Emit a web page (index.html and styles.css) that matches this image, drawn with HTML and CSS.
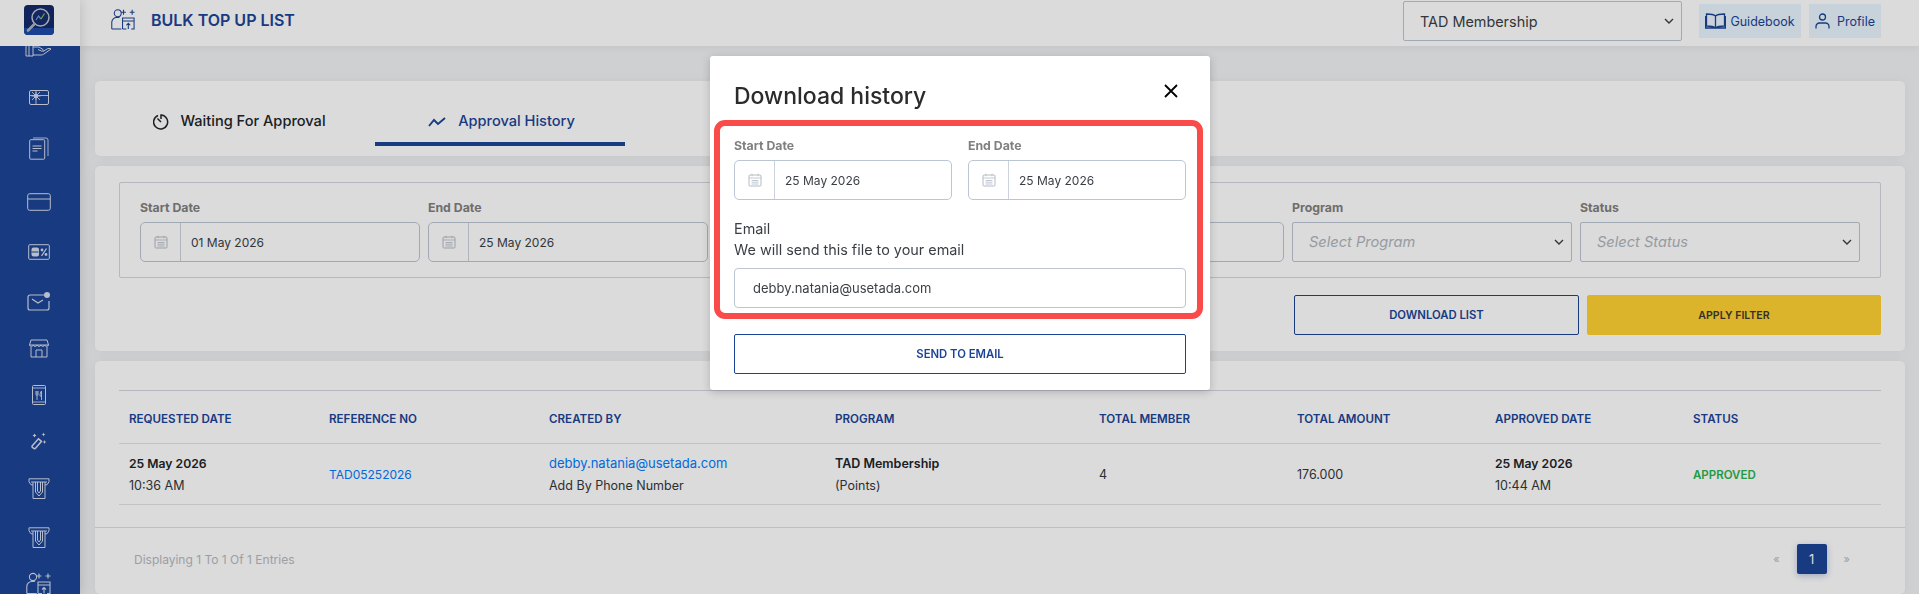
FILE: index.html
```html
<!DOCTYPE html>
<html lang="en">
<head>
<meta charset="UTF-8">
<title>Bulk Top Up List</title>
<link rel="stylesheet" href="styles.css">
</head>
<body>
    <svg class="sprites" width="0" height="0">
        <symbol id="i-calendar" viewBox="0 0 14 14" fill="none" stroke="currentColor">
            <rect x="1" y="2" width="12" height="11" rx="1"/>
            <path d="M1 5h12M4 .8v2.400M10 .8v2.400M3.500 7.500h7M3.500 9.200h7M3.500 11h7" stroke-width=".8"/>
        </symbol>
        <symbol id="i-chevron" viewBox="0 0 10 6" fill="none" stroke="currentColor" stroke-width="1.400">
            <path d="M1 1l4 4 4-4"/>
        </symbol>
        <symbol id="i-atm" viewBox="0 0 22 21" fill="none" stroke="currentColor">
            <path d="M1 .8h20v3l-2 3h-2M1 .8v3l2 3h2M3 4h16"/>
            <path d="M5 4v16.500h12V4"/>
            <path d="M7.500 4v10l3.500 4 3.500-4V4M9.500 4v9l1.500 2 1.500-2V4"/>
        </symbol>
        <symbol id="i-topup" viewBox="0 0 26 22" fill="none" stroke="currentColor" stroke-width="1.100">
            <circle cx="7" cy="5" r="3.600"/>
            <path d="M.8 21.500v-7c0-3 2.500-5 5-5h3M.8 21.500h10"/>
            <path d="M13 1.500v5M10.500 4h5M22 1.500v5M19.500 4h5"/>
            <path d="M12 21.500V10h12v11.500h-3M12 13h12M12 21.500h4M18 21.500v-6M16 17.500l2-2 2 2"/>
        </symbol>
    </svg>

    <div class="app">
        <aside class="sidebar">
            <div class="logo-box">
                <svg class="logo" viewBox="0 0 30 30">
                    <rect width="30" height="30" rx="4" fill="#14296b"/>
                    <path d="M0 23h30v3a4 4 0 0 1-4 4H4a4 4 0 0 1-4-4z" fill="#1d4aa8"/>
                    <circle cx="16.500" cy="12.500" r="8.500" fill="#172e6e" stroke="#bfc5d6" stroke-width="1.500"/>
                    <path d="M10.500 19l-6.500 6.500" stroke="#aeb3bd" stroke-width="2.600" stroke-linecap="round"/>
                    <path d="M12 15l2.500-4 2.500 3" fill="none" stroke="#6f9ae0" stroke-width="1.200"/>
                    <path d="M17 14l3.500-5.500" fill="none" stroke="#8fc33c" stroke-width="1.200"/>
                </svg>
            </div>
            <nav class="side-nav">
                <ul class="side-list">
                    <li><svg width="27" height="14" viewBox="0 0 27 14" fill="none" stroke="currentColor"><path d="M1 2h7v11H1zM4 2v11"/><path d="M8 4h6l4 2.500c1 1-.5 2-1.500 1.500L13 6.500M8 12h8c1.500 0 2-.5 3-1l7-5c-1-1-3-.5-4 0l-4 2.500"/></svg></li>
                    <li><svg width="20" height="15" viewBox="0 0 20 15" fill="none" stroke="currentColor"><rect x=".5" y=".5" width="19" height="14" rx="1.500"/><path d="M.5 5.500h19M7 .5v14M3 2l8 8M11 2l-8 8M7 2v8M2.500 6h9" stroke-width=".9"/><circle cx="7" cy="6" r="2" fill="currentColor" stroke="none"/></svg></li>
                    <li><svg width="20" height="23" viewBox="0 0 20 23" fill="none" stroke="currentColor"><rect x=".7" y="2.700" width="15" height="19.500" rx="1"/><path d="M4 1h13a2 2 0 0 1 2 2v16" stroke-width=".9"/><path d="M3.500 9h9M3.500 11.500h9M3.500 14h5" stroke-width="1.100"/></svg></li>
                    <li><svg width="24" height="18" viewBox="0 0 24 18" fill="none" stroke="currentColor"><rect x=".7" y=".7" width="22.600" height="16.600" rx="2"/><path d="M.7 6h22.600"/></svg></li>
                    <li><svg width="22" height="16" viewBox="0 0 22 16" fill="none" stroke="currentColor"><rect x=".7" y=".7" width="20.600" height="14.600" rx="1"/><rect x="3.500" y="3.500" width="7.500" height="9" rx="2" fill="currentColor" stroke="none"/><path d="M3.500 8h7" stroke="#1b4497"/><path d="M13.500 12l5-7.500" stroke-width="1.300"/><circle cx="14" cy="6" r="1.400" fill="currentColor" stroke="none"/><circle cx="18" cy="10.500" r="1.400" fill="currentColor" stroke="none"/></svg></li>
                    <li><svg width="24" height="19" viewBox="0 0 24 19" fill="none" stroke="currentColor"><path d="M17 3H3a2 2 0 0 0-2 2v11a2 2 0 0 0 2 2h17a2 2 0 0 0 2-2V9" stroke-width="1.200"/><path d="M5 7l6 4 5-3" stroke-width="1.200"/><circle cx="20" cy="3" r="3" fill="currentColor" stroke="none"/></svg></li>
                    <li><svg width="20" height="19" viewBox="0 0 20 19" fill="none" stroke="currentColor"><path d="M2 1h16l1.500 5h-19zM.5 6a2 2 0 0 0 3.800 0 2 2 0 0 0 3.800 0 2 2 0 0 0 3.800 0 2 2 0 0 0 3.800 0 2 2 0 0 0 3.800 0M2 8v10h16V8M7 18v-7h6v7"/></svg></li>
                    <li><svg width="14" height="20" viewBox="0 0 14 20" fill="none" stroke="currentColor"><rect x=".5" y=".5" width="13" height="19" rx="1"/><path d="M.5 17h13M.5 3h13M4 6v3.500a1 1 0 0 0 1 1V15M5 6v4M6 6v3.500a1 1 0 0 1-1 1M9.500 15V6c-1 1-1.500 3-1.500 5h1.500" stroke-width=".9"/></svg></li>
                    <li><svg width="16" height="18" viewBox="0 0 16 18" fill="none" stroke="currentColor"><path d="M1.300 13.800l6.200-7 3 2.500-6 7a1.200 1.200 0 0 1-1.700.1l-1.400-1a1.200 1.200 0 0 1-.1-1.600z" stroke-width="1.500"/><path d="M3.500 1.500l.7 1.300 1.300.7-1.300.7-.7 1.300-.7-1.300-1.300-.7 1.300-.7zM12.500.5l.6 1.400 1.400.6-1.400.6-.6 1.400-.6-1.400-1.400-.6 1.400-.6zM13.500 8l.6 1.400 1.400.6-1.400.6-.6 1.400-.6-1.400-1.400-.6 1.400-.6z" fill="currentColor" stroke="none"/></svg></li>
                    <li><svg width="22" height="21"><use href="#i-atm"/></svg></li>
                    <li><svg width="22" height="21"><use href="#i-atm"/></svg></li>
                    <li><svg width="26" height="22"><use href="#i-topup"/></svg></li>
                </ul>
            </nav>
        </aside>

        <div class="main">
            <header class="topbar">
                <svg class="topbar-icon" width="25" height="22"><use href="#i-topup"/></svg>
                <h1>BULK TOP UP LIST</h1>
                <div class="topbar-right">
                    <div class="select program-select">
                        <span>TAD Membership</span>
                        <svg width="10" height="6"><use href="#i-chevron"/></svg>
                    </div>
                    <a class="top-btn guide-btn">
                        <svg width="21" height="16" viewBox="0 0 21 16" fill="none" stroke="currentColor" stroke-width="1.300"><path d="M10.500 3C9 1.500 6 1 1.500 1v12c4.500 0 7.500.5 9 2 1.500-1.500 4.500-2 9-2V1c-4.500 0-7.500.5-9 2zM10.500 3v12M.6 3v12h19.800V3"/></svg>
                        Guidebook
                    </a>
                    <a class="top-btn profile-btn">
                        <svg width="15" height="16" viewBox="0 0 15 16" fill="none" stroke="currentColor" stroke-width="1.300"><circle cx="7.500" cy="4" r="3"/><path d="M1 15.500v-2a3.500 3.500 0 0 1 3.500-3.500h6a3.500 3.500 0 0 1 3.500 3.500v2"/></svg>
                        Profile
                    </a>
                </div>
            </header>

            <div class="content">
                <section class="card tabs">
                    <a class="tab">
                        <svg width="16" height="17" viewBox="0 0 16 17" fill="none" stroke="currentColor" stroke-width="1.500"><path d="M5 2.500a7 7 0 1 0 3-.5v4"/><path d="M4.500 5.500L8 9"/></svg>
                        Waiting For Approval
                    </a>
                    <a class="tab active">
                        <svg width="19" height="11" viewBox="0 0 19 11" fill="none" stroke="currentColor" stroke-width="1.900"><path d="M1 10l5-6 4 4 7-6"/></svg>
                        Approval History
                    </a>
                </section>

                <section class="card filter-card">
                    <div class="filter-box">
                        <div class="field">
                            <label>Start Date</label>
                            <div class="date-input">
                                <span class="date-icon"><svg width="14" height="14"><use href="#i-calendar"/></svg></span>
                                <span class="date-value">01 May 2026</span>
                            </div>
                        </div>
                        <div class="field">
                            <label>End Date</label>
                            <div class="date-input">
                                <span class="date-icon"><svg width="14" height="14"><use href="#i-calendar"/></svg></span>
                                <span class="date-value">25 May 2026</span>
                            </div>
                        </div>
                        <div class="field">
                            <label>Created By</label>
                            <div class="date-input"></div>
                        </div>
                        <div class="field">
                            <label>Reference No</label>
                            <div class="date-input"></div>
                        </div>
                        <div class="field">
                            <label>Program</label>
                            <div class="select">
                                <span class="placeholder">Select Program</span>
                                <svg width="10" height="6"><use href="#i-chevron"/></svg>
                            </div>
                        </div>
                        <div class="field">
                            <label>Status</label>
                            <div class="select">
                                <span class="placeholder">Select Status</span>
                                <svg width="10" height="6"><use href="#i-chevron"/></svg>
                            </div>
                        </div>
                    </div>
                    <div class="filter-actions">
                        <button class="btn btn-outline download-btn">DOWNLOAD LIST</button>
                        <button class="btn btn-yellow">APPLY FILTER</button>
                    </div>
                </section>

                <section class="card table-card">
                    <table class="list-table">
                        <thead>
                            <tr>
                                <th class="col-date">REQUESTED DATE</th>
                                <th class="col-ref">REFERENCE NO</th>
                                <th class="col-user">CREATED BY</th>
                                <th class="col-program">PROGRAM</th>
                                <th>TOTAL MEMBER</th>
                                <th>TOTAL AMOUNT</th>
                                <th>APPROVED DATE</th>
                                <th>STATUS</th>
                            </tr>
                        </thead>
                        <tbody>
                            <tr>
                                <td><b class="day">25 May 2026</b><br>10:36 AM</td>
                                <td><a class="link ref-link">TAD05252026</a></td>
                                <td><a class="link">debby.natania@usetada.com</a><br>Add By Phone Number</td>
                                <td><b>TAD Membership</b><br>(Points)</td>
                                <td>4</td>
                                <td>176.000</td>
                                <td><b class="day">25 May 2026</b><br>10:44 AM</td>
                                <td class="approved">APPROVED</td>
                            </tr>
                        </tbody>
                    </table>
                    <div class="table-footer">
                        <span class="entries">Displaying 1 To 1 Of 1 Entries</span>
                        <div class="pagination">
                            <span>«</span>
                            <a class="page active">1</a>
                            <span>»</span>
                        </div>
                    </div>
                </section>
            </div>
        </div>
    </div>

    <div class="overlay"></div>

    <div class="modal">
        <div class="modal-head">
            <h2>Download history</h2>
            <svg class="modal-close" width="14" height="14" viewBox="0 0 14 14" fill="none" stroke="#000" stroke-width="1.800"><path d="M1 1l12 12M13 1L1 13"/></svg>
        </div>
        <div class="modal-dates">
            <div class="field">
                <label>Start Date</label>
                <div class="date-input">
                    <span class="date-icon"><svg width="14" height="14"><use href="#i-calendar"/></svg></span>
                    <span class="date-value">25 May 2026</span>
                </div>
            </div>
            <div class="field">
                <label>End Date</label>
                <div class="date-input">
                    <span class="date-icon"><svg width="14" height="14"><use href="#i-calendar"/></svg></span>
                    <span class="date-value">25 May 2026</span>
                </div>
            </div>
        </div>
        <p class="email-note">Email<br>We will send this file to your email</p>
        <div class="email-input">debby.natania@usetada.com</div>
        <button class="btn btn-outline send-btn">SEND TO EMAIL</button>
        <div class="highlight"></div>
    </div>
</body>
</html>
```

FILE: styles.css
```css
* {
    box-sizing: border-box;
}

body {
    margin: 0;
    height: 594px;
    overflow: hidden;
    font-family: "Inter", "Open Sans", sans-serif;
    font-size: 12.5px;
    color: #212529;
    background-color: #f2f3f5;
}

h1, h2, p, ul {
    margin: 0;
    padding: 0;
}

.sprites {
    position: absolute;
}

.app {
    display: flex;
    height: 594px;
}

/* Sidebar */
.sidebar {
    width: 80px;
    flex-shrink: 0;
    display: flex;
    flex-direction: column;
    background-color: #1b4497;
    color: #d5dcec;
    box-shadow: 2px 0 10px rgba(0, 0, 0, 0.12);
    z-index: 2;
}

.logo-box {
    height: 46px;
    flex-shrink: 0;
    display: flex;
    align-items: center;
    justify-content: center;
    padding-right: 3px;
    padding-bottom: 6px;
    background-color: #fff;
}

.logo {
    width: 30px;
    height: 30px;
}

.side-nav {
    flex: 1;
    overflow: hidden;
}

.side-list {
    list-style: none;
    margin-top: -18px;
    padding-right: 3px;
    display: grid;
    grid-template-rows: 47px 47px 55px 53px 47px 51px 43px 51px 41px 53px 45px 47px;
    justify-items: center;
    align-items: center;
}

/* Top bar */
.main {
    flex: 1;
    min-width: 0;
    display: flex;
    flex-direction: column;
}

.topbar {
    height: 46px;
    flex-shrink: 0;
    display: flex;
    align-items: center;
    padding-left: 31px;
    padding-right: 38px;
    padding-bottom: 4px;
    background-color: #fff;
    box-shadow: 0 2px 8px rgba(0, 0, 0, 0.06);
}

.topbar-icon {
    color: #1b4497;
    margin-top: -4px;
}

.topbar h1 {
    margin-left: 15px;
    margin-top: -2px;
    font-size: 16px;
    font-weight: 600;
    color: #1b4497;
}

.topbar-right {
    margin-left: auto;
    display: flex;
    align-items: center;
    gap: 8px;
}

.top-btn {
    height: 34px;
    display: flex;
    align-items: center;
    justify-content: center;
    gap: 4px;
    font-size: 12.5px;
    color: #1b4497;
    background-color: #e9f5ff;
}

.guide-btn {
    width: 102px;
}

.profile-btn {
    width: 72px;
    gap: 7px;
}

.program-select {
    width: 279px;
    margin-right: 9px;
    font-size: 14.4px;
}

.topbar-right .program-select {
    padding-left: 16px;
}

/* Cards */
.content {
    padding: 35px 14px 0 15px;
    display: flex;
    flex-direction: column;
    gap: 10px;
}

.card {
    background-color: #fff;
    border-radius: 5px;
    box-shadow: 0 0 12px rgba(0, 0, 0, 0.05);
}

.tabs {
    height: 75px;
    display: flex;
    gap: 12px;
    padding: 10px 18px 0;
}

.tab {
    width: 250px;
    height: 55px;
    padding: 9px 0 0 3px;
    display: flex;
    align-items: center;
    justify-content: center;
    gap: 11px;
    font-size: 14.6px;
    font-weight: 500;
    border-bottom: 4px solid transparent;
}

.tab.active {
    color: #1b4497;
    border-bottom-color: #1b4497;
}

/* Filters */
.filter-card {
    padding: 16px 24px;
}

.filter-box {
    display: grid;
    grid-template-columns: repeat(6, 280px);
    gap: 8px;
    padding: 16px 20px 15px;
    border: 1px solid #d3d7dc;
    border-radius: 2px;
}

.field label {
    display: block;
    height: 18px;
    margin-bottom: 5px;
    font-size: 12.3px;
    line-height: 18px;
    font-weight: 700;
    color: #808080;
}

.date-input {
    height: 40px;
    display: flex;
    align-items: center;
    border: 1px solid #bcc6d2;
    border-radius: 5px;
    background-color: #fff;
}

.date-icon {
    width: 40px;
    height: 100%;
    flex-shrink: 0;
    display: flex;
    align-items: center;
    justify-content: center;
    color: #b4bbc6;
    border-right: 1px solid #ccd3dc;
}

.date-value {
    padding-left: 10px;
    font-size: 12px;
    color: #3a3f45;
}

.select {
    height: 40px;
    display: flex;
    align-items: center;
    justify-content: space-between;
    padding: 0 7px 0 16px;
    border: 1px solid #bcc6d2;
    border-radius: 2px;
    background-color: #fff;
    color: #3a3f45;
}

.placeholder {
    font-size: 14.6px;
    font-style: italic;
    color: #b0b5bc;
}

.filter-actions {
    display: flex;
    justify-content: flex-end;
    gap: 8px;
    margin-top: 17px;
}

.btn {
    height: 40px;
    font-family: inherit;
    font-size: 11.3px;
    font-weight: 600;
    border-radius: 2px;
    cursor: pointer;
}

.btn-outline {
    color: #1b4497;
    background-color: #fff;
    border: 1px solid #1b4497;
}

.btn-yellow {
    width: 294px;
    font-size: 10.600px;
    color: #3b3a30;
    background-color: #ffd234;
    border: 1px solid #ffd234;
}

.download-btn {
    width: 285px;
}

/* Table */
.table-card {
    padding-top: 29px;
    height: 233px;
    overflow: hidden;
}

.list-table {
    width: 1762px;
    margin-left: 24px;
    border-collapse: collapse;
    table-layout: fixed;
}

.list-table th {
    height: 53px;
    padding: 4px 10px 0;
    width: 198px;
    text-align: left;
    font-size: 11.6px;
    font-weight: 600;
    color: #1b4497;
    border-top: 1px solid #d3d7dc;
    border-bottom: 1px solid #e3e5e8;
}

.list-table th.col-date {
    width: 200px;
}

.list-table th.col-ref {
    width: 220px;
}

.list-table th.col-user {
    width: 286px;
}

.list-table th.col-program {
    width: 264px;
}

.list-table td {
    height: 61px;
    padding: 1px 10px 0;
    font-size: 12.5px;
    line-height: 22px;
    color: #33373c;
    border-bottom: 1px solid #e3e5e8;
}

.list-table b {
    font-weight: 600;
    color: #212529;
}

.list-table .day {
    font-size: 12.2px;
}

.link {
    font-size: 13px;
    color: #007bff;
}

.link.ref-link {
    font-size: 12px;
}

.list-table .approved {
    font-size: 11.500px;
    font-weight: 600;
    color: #28b44f;
}

.table-footer {
    margin-top: 22px;
    padding: 16px 55px 0 39px;
    display: flex;
    align-items: center;
    justify-content: space-between;
    border-top: 1px solid #dcdfe3;
}

.entries {
    font-size: 12px;
    color: #b5bac1;
}

.pagination {
    display: flex;
    align-items: center;
    gap: 17px;
    font-size: 11px;
    color: #b5bac1;
}

.page {
    width: 30px;
    height: 30px;
    display: flex;
    align-items: center;
    justify-content: center;
    font-size: 13px;
    color: #fff;
    background-color: #1b4497;
    border-radius: 2px;
    box-shadow: 0 2px 6px rgba(27, 68, 151, 0.3);
}

/* Modal */
.overlay {
    position: fixed;
    inset: 0;
    z-index: 10;
    background-color: rgba(0, 0, 0, 0.14);
}

.modal {
    position: absolute;
    left: 710px;
    top: 56px;
    z-index: 11;
    width: 500px;
    height: 334px;
    padding: 25px 24px 16px;
    background-color: #fff;
    border-radius: 3px;
    box-shadow: 0 2px 8px rgba(0, 0, 0, 0.2);
}

.modal-head {
    display: flex;
    justify-content: space-between;
    align-items: flex-start;
    height: 30px;
    margin-bottom: 26px;
}

.modal-head h2 {
    font-size: 23px;
    line-height: 30px;
    font-weight: 500;
    color: #2b2b2b;
}

.modal-close {
    margin-top: 3px;
    margin-right: 8px;
}

.modal-dates {
    display: grid;
    grid-template-columns: 218px 218px;
    gap: 16px;
}

.email-note {
    margin-top: 18px;
    font-size: 14.4px;
    line-height: 21px;
    color: #3a3f45;
}

.email-input {
    height: 40px;
    margin-top: 8px;
    padding-left: 18px;
    display: flex;
    align-items: center;
    font-size: 13px;
    color: #3a3f45;
    border: 1px solid #bcc6d2;
    border-radius: 4px;
}

.send-btn {
    width: 100%;
    margin-top: 26px;
}

.highlight {
    position: absolute;
    left: 4px;
    top: 64px;
    width: 489px;
    height: 199px;
    border: 6px solid #f94c4a;
    border-radius: 11px;
    pointer-events: none;
}
```
